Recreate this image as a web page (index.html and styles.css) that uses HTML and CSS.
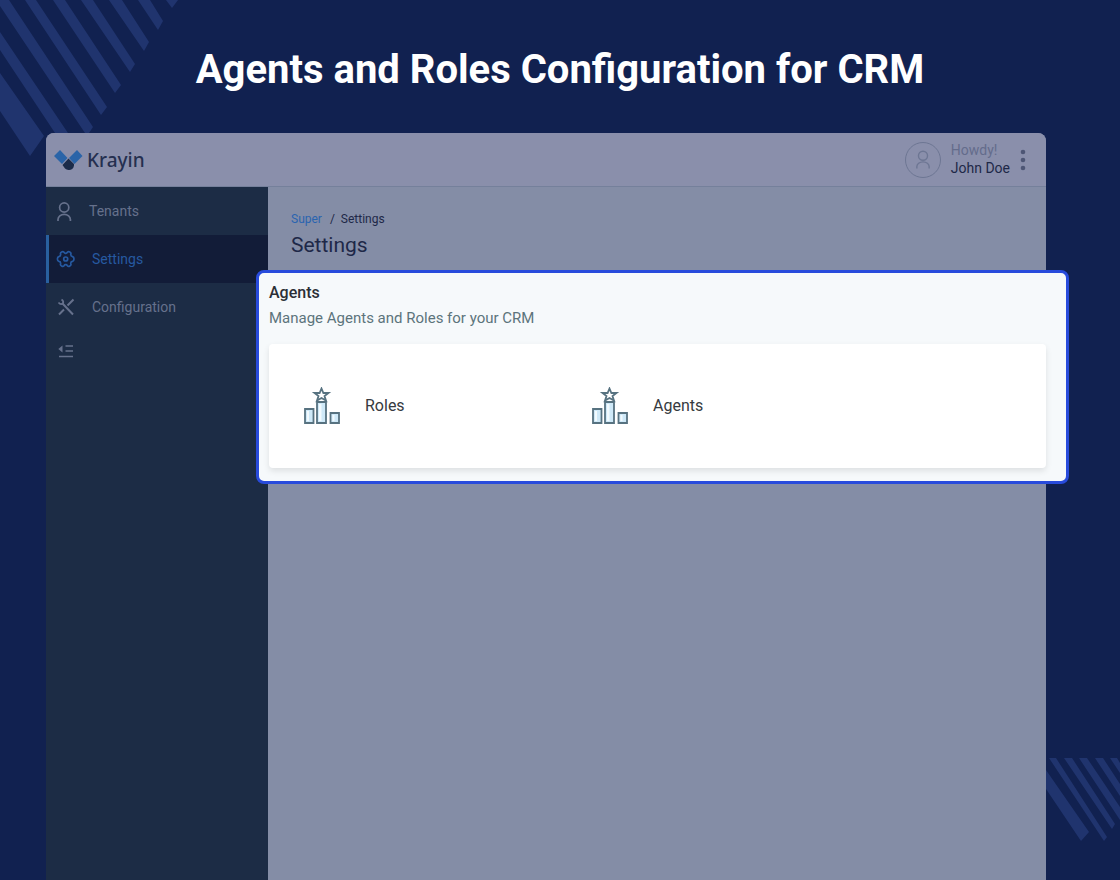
FILE: index.html
```html
<!DOCTYPE html>
<html lang="en">
<head>
<meta charset="utf-8">
<title>Agents and Roles Configuration for CRM</title>
<meta name="viewport" content="width=device-width, initial-scale=1">
<link rel="stylesheet" href="styles.css">
</head>
<body>
<svg class="stripes stripes-top" viewBox="0 0 180 160" aria-hidden="true">
  <path d="M0 73L44 136L30 156L0 111ZM0 32L70 136L57 136L0 50ZM0 0H9L93 127L87 136L0 6ZM25 0H36L107 107L101 115ZM53 0H65L121 85L115 93ZM81 0H93L135 64L130 72ZM109 0H122L149 42L144 51ZM138 0H150L163 21L158 30ZM166 0H178L172 8Z"/>
</svg>
<svg class="stripes stripes-bottom" viewBox="0 0 74 84" aria-hidden="true">
  <path d="M0 12L43 74L35 83L0 31ZM3 0H10L61 79L58 83ZM18 0H26L69 66L66 71ZM33 0H41L74 49V62ZM49 0H57L74 26V38ZM64 0H71L74 5V15Z"/>
</svg>
<h1 class="headline">Agents and Roles Configuration for CRM</h1>
<div class="app">
  <header class="topbar">
    <a class="brand" href="#">
      <svg class="brand-mark" viewBox="0 0 30 22" aria-hidden="true">
        <path class="wing" d="M1 7L7 1L14.500 9L9 15ZM29.500 7L24 1L16 9L21.500 15Z"/>
        <path class="tail" d="M15.500 9.500L21 15V16.500A5 5 0 0 1 15.500 21A5 5 0 0 1 12 19.500L9.500 16Z"/>
      </svg>
      <span>Krayin</span>
    </a>
    <div class="account">
      <span class="avatar">
        <svg viewBox="0 0 36 36" aria-hidden="true"><circle cx="18" cy="13.500" r="4.800"/><path d="M11.500 27V25A6.500 5 0 0 1 24.500 25V27"/></svg>
      </span>
      <div class="who"><span class="greeting">Howdy!</span><span>John Doe</span></div>
      <button class="more" aria-label="Account menu"><svg viewBox="0 0 6 22" aria-hidden="true"><circle cx="3" cy="3" r="2.300"/><circle cx="3" cy="11" r="2.300"/><circle cx="3" cy="19" r="2.300"/></svg></button>
    </div>
  </header>
  <div class="body">
    <nav class="sidebar">
      <a class="item item-tenants" href="#">
        <svg viewBox="0 0 20 20" aria-hidden="true"><circle cx="8.200" cy="6.500" r="4.600"/><path d="M2 20V18.500A6.200 5.200 0 0 1 14.400 18.500V20"/></svg>
        <span>Tenants</span>
      </a>
      <a class="item active" href="#" aria-current="page">
        <svg viewBox="0 0 20 20" aria-hidden="true"><path d="M5.600 3Q7 2 8 3.300Q8.700 4.400 9.700 4.300Q10.700 4.400 11.400 3.300Q12.400 2 13.800 3Q15.400 3.800 14.800 5.300Q14.600 7.300 16.500 7.600Q18 8 18 10Q18 12 16.500 12.400Q14.600 12.700 14.800 14.700Q15.400 16.200 13.800 17Q12.400 18 11.400 16.700Q10.700 15.600 9.700 15.700Q8.700 15.600 8 16.700Q7 18 5.600 17Q4 16.200 4.600 14.700Q4.800 12.700 2.900 12.400Q1.400 12 1.400 10Q1.400 8 2.900 7.600Q4.800 7.300 4.600 5.300Q4 3.800 5.600 3Z"/><circle cx="9.700" cy="10" r="2"/></svg>
        <span>Settings</span>
      </a>
      <a class="item" href="#">
        <svg class="tools" viewBox="0 0 20 20" aria-hidden="true"><path d="M3 17.500L8 12.500M11.500 8.500L17.500 2.500M6 6L17 17.500"/><path class="thin" d="M5.500 2.500Q8 4 7 6.500Q4.500 8 2.500 5.500"/></svg>
        <span>Configuration</span>
      </a>
      <button class="collapse" aria-label="Collapse menu"><svg viewBox="0 0 16 14" aria-hidden="true"><path class="arrow" d="M4.500 1.500V8.500L0.300 5Z"/><path d="M7.500 2H15M7.500 7H15M1 12.500H15"/></svg></button>
    </nav>
    <main class="content">
      <nav class="crumbs" aria-label="Breadcrumb"><a href="#">Super</a><span>/&nbsp; Settings</span></nav>
      <h2 class="page-title">Settings</h2>
      <section class="spotlight">
        <h3 class="section-title">Agents</h3>
        <p class="section-note">Manage Agents and Roles for your CRM</p>
        <div class="card">
          <a class="tile" href="#">
            <svg viewBox="0 0 38 38" aria-hidden="true"><path class="star" d="M18.500 1.500L20.400 6H25.500L21.500 9L23 13.500L18.500 11L14 13.500L15.500 9L11.500 6H16.600Z"/><path class="bar" d="M2 22H10.500V36H2ZM14 15H23V36H14ZM27.500 26H36V36H27.500Z"/><path class="shine" d="M4 24H6V34H4ZM16 17H18.500V34H16ZM29.500 28H31.500V34H29.500Z"/></svg>
            <span>Roles</span>
          </a>
          <a class="tile" href="#">
            <svg viewBox="0 0 38 38" aria-hidden="true"><path class="star" d="M18.500 1.500L20.400 6H25.500L21.500 9L23 13.500L18.500 11L14 13.500L15.500 9L11.500 6H16.600Z"/><path class="bar" d="M2 22H10.500V36H2ZM14 15H23V36H14ZM27.500 26H36V36H27.500Z"/><path class="shine" d="M4 24H6V34H4ZM16 17H18.500V34H16ZM29.500 28H31.500V34H29.500Z"/></svg>
            <span>Agents</span>
          </a>
        </div>
      </section>
    </main>
  </div>
</div>
</body>
</html>
```
FILE: styles.css
```css
* { box-sizing: border-box; }

body {
  margin: 0;
  min-height: 100vh;
  display: flex;
  flex-direction: column;
  position: relative;
  background: #112150;
  font-family: Roboto, "Liberation Sans", sans-serif;
  font-size: 14px;
}

h1, h2, h3, p { margin: 0; }
a { color: inherit; text-decoration: none; }
button { border: 0; padding: 0; background: none; cursor: pointer; }
svg { display: block; flex: none; }

.stripes { position: absolute; fill: #20346e; }
.stripes-top { top: 0; left: 0; width: 180px; }
.stripes-bottom { right: 0; bottom: 38px; width: 74px; }

.headline {
  position: relative;
  padding: 46px 24px 39px;
  color: #fff;
  font-size: 40px;
  line-height: 48px;
  font-weight: 700;
  text-align: center;
}

.app {
  position: relative;
  flex: 1;
  display: flex;
  flex-direction: column;
  margin: 0 74px 0 46px;
  border-radius: 8px 8px 0 0;
  background: #848da6;
}

.topbar {
  display: flex;
  align-items: center;
  justify-content: space-between;
  height: 54px;
  padding: 0 20px 0 7px;
  border-bottom: 1px solid #75809b;
  border-radius: 8px 8px 0 0;
  background: #8a8fab;
}

.brand {
  display: flex;
  align-items: center;
  gap: 4px;
  color: #252f50;
  font: 500 19px/24px "Noto Sans", sans-serif;
}
.brand-mark { width: 30px; }
.wing { fill: #2a64a8; }
.tail { fill: #1b2b49; }

.account { display: flex; align-items: center; gap: 10px; }
.avatar {
  width: 36px;
  height: 36px;
  border: 1px solid #6d7693;
  border-radius: 50%;
}
.avatar svg { fill: none; stroke: #6d7693; stroke-width: 1.5; }
.who {
  display: flex;
  flex-direction: column;
  padding-bottom: 2px;
  color: #1e2848;
  line-height: 18px;
}
.greeting { color: #646c8b; }
.more svg { width: 6px; fill: #4e5675; }

.body { flex: 1; display: flex; }

.sidebar {
  flex: none;
  width: 222px;
  background: #1c2c45;
  color: #66718c;
}
.item {
  display: flex;
  align-items: center;
  gap: 16px;
  height: 48px;
  padding: 0 0 1px 10px;
}
.item svg, .collapse svg { width: 20px; fill: none; stroke: currentColor; stroke-width: 1.7; }
.item-tenants { gap: 13px; }
.active {
  padding-left: 7px;
  border-left: 3px solid #29609f;
  background: #121c38;
  color: #2659a0;
}
.item .tools { stroke-width: 2; }
.tools .thin { stroke-width: 1.7; }
.collapse { display: block; padding: 13px 12px; color: inherit; }
.collapse svg { width: 16px; }
.collapse .arrow { fill: currentColor; stroke: none; }

.content { flex: 1; min-width: 0; padding: 23px 0 0 1px; }
.crumbs {
  display: flex;
  gap: 8px;
  padding-left: 22px;
  color: #1e2848;
  font-size: 12px;
  line-height: 18px;
}
.crumbs a { color: #2a64b0; }
.page-title {
  padding: 4px 0 12px 22px;
  color: #1e2848;
  font-size: 21px;
  line-height: 26px;
  font-weight: 400;
}

.spotlight {
  position: relative;
  margin: 0 -23px 0 -13px;
  padding: 10px 20px 13px 10px;
  border: 3px solid #284bdc;
  border-radius: 8px;
  background: #f6f9fb;
}
.section-title {
  color: #2b2f36;
  font-size: 16px;
  line-height: 20px;
  font-weight: 500;
}
.section-note { margin-top: 5px; color: #5c747c; font-size: 15px; line-height: 20px; }
.card {
  display: grid;
  grid-template-columns: 288px 288px;
  margin-top: 16px;
  padding: 43px 34px;
  border-radius: 4px;
  background: #fff;
  box-shadow: 0 3px 6px rgba(0, 0, 0, 0.1);
}
.tile {
  display: flex;
  align-items: center;
  gap: 24px;
  color: #363a40;
  font-size: 16px;
  line-height: 20px;
}
.tile svg { width: 38px; }
.star { fill: #fff; stroke: #577280; stroke-width: 1.8; }
.bar { fill: #cfe9f8; stroke: #577280; stroke-width: 1.8; }
.shine { fill: #f2fafe; }
```
